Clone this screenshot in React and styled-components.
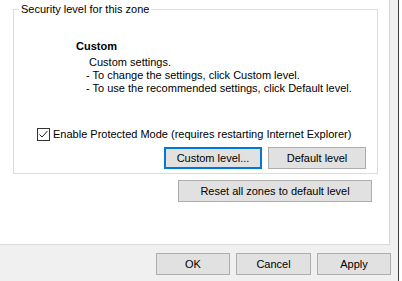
import React from "react";
import styled, { createGlobalStyle } from "styled-components";

const Global = createGlobalStyle`
  html, body { margin: 0; padding: 0; background: #f0f0f0; }
  body { font-family: "Liberation Sans", Arial, sans-serif; font-size: 11px; color: #000; }
  * { box-sizing: border-box; }
`;

const Screen = styled.div`
  width: 402px;
  height: 281px;
  display: flex;
  overflow: hidden;
  background: #f0f0f0;
`;

const Dialog = styled.div`
  width: 398px;
  display: flex;
  flex-direction: column;
`;

const TabPanel = styled.div`
  width: 390px;
  height: 245px;
  background: #fff;
  border-right: 1px solid #d9d9d9;
  border-bottom: 1px solid #d9d9d9;
  padding-top: 2px;
  display: flex;
  flex-direction: column;
`;

const Group = styled.fieldset`
  margin: 0 0 0 13px;
  padding: 0;
  width: 365px;
  height: 172px;
  border: 1px solid #dcdcdc;
  display: flex;
  flex-direction: column;
`;

const Legend = styled.legend`
  margin-left: 5px;
  padding: 0 2px;
  line-height: 14px;
  font-size: 11px;
`;

const Heading = styled.div`
  margin: 24px 0 0 62px;
  font-weight: bold;
  line-height: 13px;
`;

const Description = styled.div`
  margin: 3px 0 0 72px;
  line-height: 13px;
`;

const CheckRow = styled.label`
  margin: 33px 0 0 23px;
  display: flex;
  align-items: center;
  gap: 3px;
  line-height: 13px;
`;

const Box = styled.span`
  width: 13px;
  height: 13px;
  border: 1px solid #333;
  background: #fff;
  display: flex;
  align-items: center;
  justify-content: center;
`;

const ButtonRow = styled.div`
  margin-top: 6px;
  padding-right: 11px;
  display: flex;
  justify-content: flex-end;
  gap: 6px;
`;

const Button = styled.button`
  width: ${(p) => p.$w}px;
  height: 22px;
  padding: 0;
  font-family: inherit;
  font-size: 11px;
  color: #000;
  background: #e1e1e1;
  border: ${(p) => (p.$focused ? "2px solid #0078d7" : "1px solid #adadad")};
  margin: 0;
`;

const ResetRow = styled.div`
  margin: 6px 0 0 178px;
`;

const Footer = styled.div`
  padding: 8px 7px 0 0;
  display: flex;
  justify-content: flex-end;
  gap: 6px;
`;

const Edge = styled.div`
  width: 1px;
  background: #3c3c3c;
`;

const Behind = styled.div`
  flex: 1;
  background: #fff;
`;

export default function App() {
  return (
    <>
      <Global />
      <Screen>
        <Dialog>
          <TabPanel>
            <Group>
              <Legend>Security level for this zone</Legend>
              <Heading>Custom</Heading>
              <Description>
                &nbsp;Custom settings.
                <br />- To change the settings, click Custom level.
                <br />- To use the recommended settings, click Default level.
              </Description>
              <CheckRow>
                <Box>
                  <svg width="11" height="11" viewBox="0 0 11 11">
                    <path d="M1.5 5.5 L4 8 L9.5 2" fill="none" stroke="#222" strokeWidth="1" />
                  </svg>
                </Box>
                Enable Protected Mode (requires restarting Internet Explorer)
              </CheckRow>
              <ButtonRow>
                <Button $w={98} $focused>Custom level...</Button>
                <Button $w={98}>Default level</Button>
              </ButtonRow>
            </Group>
            <ResetRow>
              <Button $w={194}>Reset all zones to default level</Button>
            </ResetRow>
          </TabPanel>
          <Footer>
            <Button $w={74}>OK</Button>
            <Button $w={75}>Cancel</Button>
            <Button $w={74}>Apply</Button>
          </Footer>
        </Dialog>
        <Edge />
        <Behind />
      </Screen>
    </>
  );
}
